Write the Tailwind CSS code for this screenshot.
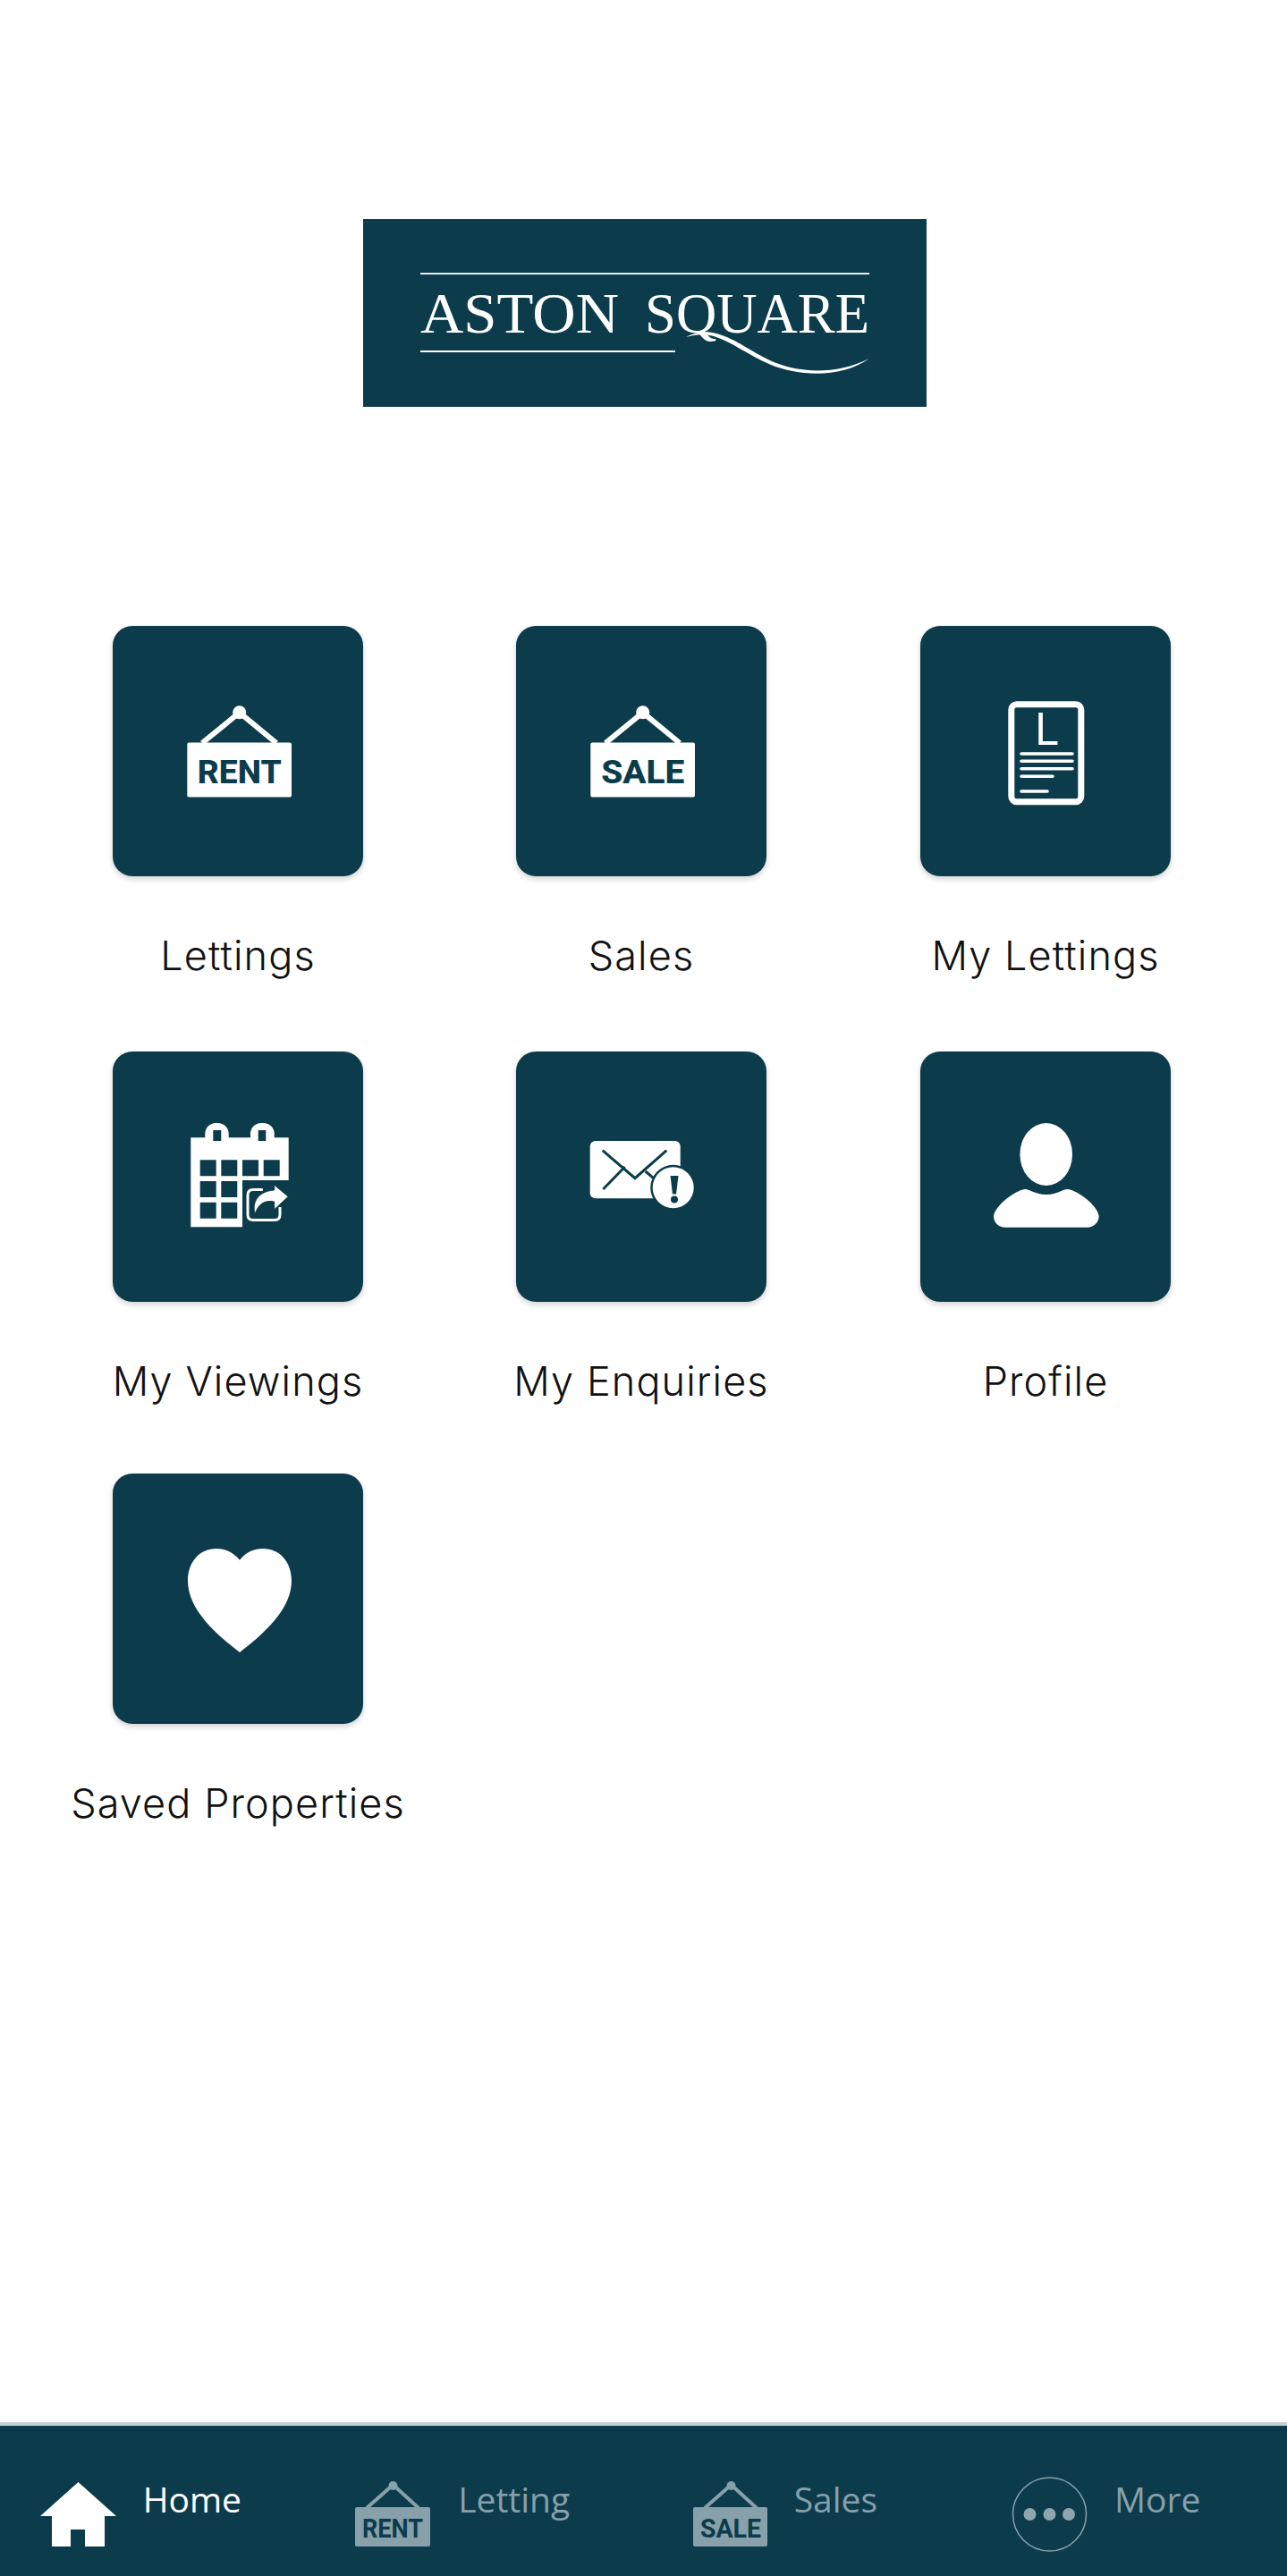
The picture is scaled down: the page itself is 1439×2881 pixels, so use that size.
<!doctype html>
<html>
  <head>
    <title>Aston Square</title>
    <script src="https://cdn.jsdelivr.net/npm/@tailwindcss/browser@4"></script>
  </head>
  <body class="bg-white">
    <div class="h-[2881px] flex flex-col font-['Inter',sans-serif]">
      <main class="flex-1">
        <!-- Logo -->
        <div class="pt-[245px] pl-[2px] flex justify-center">
          <svg class="w-[630px] h-[210px] bg-[#0c3c4c]" viewBox="0 0 630 210">
            <rect x="64" y="60" width="502" height="2" fill="#e8eef0" />
            <g fill="#fff" font-size="63" class="font-['Liberation_Serif',serif]">
              <text x="64" y="127" textLength="222" lengthAdjust="spacingAndGlyphs">ASTON</text>
              <text x="315" y="127" textLength="251" lengthAdjust="spacingAndGlyphs">SQUARE</text>
            </g>
            <rect x="64" y="147" width="285" height="2" fill="#fff" />
            <path d="M361 132C372 126 384 125 395 128C418 134 435 150 462 161C490 172 530 174 566 156C535 178 488 176 456 163C430 152 412 137 392 131C381 128 371 129 361 132Z" fill="#fff" />
          </svg>
        </div>

        <!-- Menu tiles -->
        <div class="mt-[245px] pl-[41px] grid grid-cols-[450px_452px_452px] grid-rows-[476px_472px_auto]">
          <a class="flex flex-col items-center">
            <div class="w-[280px] h-[280px] rounded-[22px] bg-[#0c3c4c] shadow-[0_3px_6px_rgba(0,0,0,0.18)]">
              <svg class="w-full h-full" viewBox="0 0 280 280">
                <path d="M100 131L141.7 97L183 131" fill="none" stroke="#fff" stroke-width="6" />
                <circle cx="141.7" cy="96.7" r="7.5" fill="#fff" />
                <rect x="83.3" y="130.5" width="116.7" height="61" rx="2" fill="#fff" />
                <text x="141.7" y="176" text-anchor="middle" textLength="94" lengthAdjust="spacingAndGlyphs" font-size="37" font-weight="800" fill="#0c3c4c" class="font-['Roboto',sans-serif]">RENT</text>
              </svg>
            </div>
            <span class="mt-[59px] text-[45px] leading-[60px] font-[350] tracking-[1.1px] text-[#111]">Lettings</span>
          </a>
          <a class="flex flex-col items-center">
            <div class="w-[280px] h-[280px] rounded-[22px] bg-[#0c3c4c] shadow-[0_3px_6px_rgba(0,0,0,0.18)]">
              <svg class="w-full h-full" viewBox="0 0 280 280">
                <path d="M100 131L141.7 97L183 131" fill="none" stroke="#fff" stroke-width="6" />
                <circle cx="141.7" cy="96.7" r="7.5" fill="#fff" />
                <rect x="83.3" y="130.5" width="116.7" height="61" rx="2" fill="#fff" />
                <text x="141.7" y="176" text-anchor="middle" textLength="93" lengthAdjust="spacingAndGlyphs" font-size="37" font-weight="800" fill="#0c3c4c" class="font-['Roboto',sans-serif]">SALE</text>
              </svg>
            </div>
            <span class="mt-[59px] text-[45px] leading-[60px] font-[350] tracking-[1.1px] text-[#111]">Sales</span>
          </a>
          <a class="flex flex-col items-center">
            <div class="w-[280px] h-[280px] rounded-[22px] bg-[#0c3c4c] shadow-[0_3px_6px_rgba(0,0,0,0.18)]">
              <svg class="w-full h-full" viewBox="0 0 280 280">
                <rect x="101.8" y="87.8" width="78" height="109" rx="6" fill="none" stroke="#fff" stroke-width="7" />
                <text x="128" y="133" font-size="49" fill="#fff" class="font-['Inter',sans-serif]">L</text>
                <path d="M113 143H170M113 151.3H170M113 159.7H170M113 168.3H148M113 185H142" fill="none" stroke="#fff" stroke-width="3.6" stroke-linecap="round" />
              </svg>
            </div>
            <span class="mt-[59px] text-[45px] leading-[60px] font-[350] tracking-[1.1px] text-[#111]">My Lettings</span>
          </a>
          <a class="flex flex-col items-center">
            <div class="w-[280px] h-[280px] rounded-[22px] bg-[#0c3c4c] shadow-[0_3px_6px_rgba(0,0,0,0.18)]">
              <svg class="w-full h-full" viewBox="0 0 280 280">
                <path fill-rule="evenodd" fill="#fff" d="M87.3 96.3H103.3V92A12 12 0 0 1 115.3 80H117.7A12 12 0 0 1 129.7 92V96.3H154V92A12 12 0 0 1 166 80H168.7A12 12 0 0 1 180.7 92V96.3H196.7V144H145V196.3H87.3ZM112.3 88V100H121.3V88ZM162.7 88V100H171.3V88ZM97.7 121.3V139.3H115.7V121.3ZM121.3 121.3V139.3H139.3V121.3ZM145 121.3V139.3H163V121.3ZM168.7 121.3V139.3H186.7V121.3ZM97.7 145V163H115.7V145ZM121.3 145V163H139.3V145ZM97.7 168.7V186.7H115.7V168.7ZM121.3 168.7V186.7H139.3V168.7Z" />
                <path d="M168 154.5H157Q151 154.5 151 160.5V182.5Q151 188.5 157 188.5H181Q187 188.5 187 182.5V174" fill="none" stroke="#fff" stroke-width="3" />
                <path d="M180.7 149.3L196.3 162.3L180.7 176.7V168C170 166 163 170 159 182C155 166 165 156 180.7 155Z" fill="#fff" stroke="#0c3c4c" stroke-width="1" />
              </svg>
            </div>
            <span class="mt-[59px] text-[45px] leading-[60px] font-[350] tracking-[1.1px] text-[#111]">My Viewings</span>
          </a>
          <a class="flex flex-col items-center">
            <div class="w-[280px] h-[280px] rounded-[22px] bg-[#0c3c4c] shadow-[0_3px_6px_rgba(0,0,0,0.18)]">
              <svg class="w-full h-full" viewBox="0 0 280 280">
                <rect x="82.7" y="100" width="101" height="64.3" rx="6" fill="#fff" />
                <path d="M96.7 110.7L133 141.7L168.3 110.7M97.3 154L121.7 129M144.7 134L155.7 143.3" fill="none" stroke="#0c3c4c" stroke-width="3" />
                <circle cx="175.7" cy="152.3" r="25.5" fill="#0c3c4c" />
                <circle cx="175.7" cy="152.3" r="23" fill="#fff" />
                <path d="M172.5 139H181.5L179 159.5H175Z" fill="#0c3c4c" />
                <circle cx="177" cy="165.5" r="4" fill="#0c3c4c" />
              </svg>
            </div>
            <span class="mt-[59px] text-[45px] leading-[60px] font-[350] tracking-[1.1px] text-[#111]">My Enquiries</span>
          </a>
          <a class="flex flex-col items-center">
            <div class="w-[280px] h-[280px] rounded-[22px] bg-[#0c3c4c] shadow-[0_3px_6px_rgba(0,0,0,0.18)]">
              <svg class="w-full h-full" viewBox="0 0 280 280">
                <ellipse cx="140.7" cy="115" rx="29.3" ry="35" fill="#fff" />
                <path d="M82 184C84 172 105 156 117 154C123 154 128 160 141 160C154 160 158 154 165 154C177 156 198 172 199.7 184C199.7 192 193 196.7 187 196.7H95C88 196.7 82 192 82 184Z" fill="#fff" />
              </svg>
            </div>
            <span class="mt-[59px] text-[45px] leading-[60px] font-[350] tracking-[1.1px] text-[#111]">Profile</span>
          </a>
          <a class="flex flex-col items-center">
            <div class="w-[280px] h-[280px] rounded-[22px] bg-[#0c3c4c] shadow-[0_3px_6px_rgba(0,0,0,0.18)]">
              <svg class="w-full h-full" viewBox="0 0 280 280">
                <path d="M142 96.7C135 88 126 84 116 84C97 84 84 99 84 120C84 152 116 180 142 200C168 180 200 152 200 120C200 99 187 84 168 84C158 84 149 88 142 96.7Z" fill="#fff" />
              </svg>
            </div>
            <span class="mt-[59px] text-[45px] leading-[60px] font-[350] tracking-[1.1px] text-[#111] whitespace-nowrap">Saved Properties</span>
          </a>
        </div>
      </main>

      <!-- Bottom tab bar -->
      <nav class="h-[172px] border-t-4 border-[#c6ced2] bg-[#0c3c4c] grid grid-cols-4 font-['Open_Sans',sans-serif] text-[39px] leading-[54px]">
        <a class="flex justify-center items-start pt-[57px] pr-[45px] gap-[30px] text-white">
          <svg class="w-[85px] h-[85px] shrink-0" viewBox="0 0 85 85">
            <path fill-rule="evenodd" fill="#fff" d="M42.5 6L85 44H72V78H13V44H0ZM34 59V78H50V59Z" />
          </svg>
          <span class="-mt-[2px]">Home</span>
        </a>
        <a class="flex justify-center items-start pt-[57px] pr-[45px] gap-[30px] text-[#87a0aa]">
          <svg class="w-[85px] h-[85px] shrink-0" viewBox="0 0 85 85">
            <path d="M13 35L42.5 9L71 35" fill="none" stroke="#87a0aa" stroke-width="4" />
            <circle cx="42.5" cy="10" r="5" fill="#87a0aa" />
            <rect x="0" y="34" width="84" height="44" rx="2" fill="#87a0aa" />
            <text x="42" y="68" text-anchor="middle" textLength="68" lengthAdjust="spacingAndGlyphs" font-size="29" font-weight="700" fill="#0c3c4c" class="font-['Roboto',sans-serif]">RENT</text>
          </svg>
          <span class="-mt-[2px]">Letting</span>
        </a>
        <a class="flex justify-center items-start pt-[57px] pr-[45px] gap-[30px] text-[#87a0aa]">
          <svg class="w-[85px] h-[85px] shrink-0" viewBox="0 0 85 85">
            <path d="M15 35L44.5 9L73 35" fill="none" stroke="#87a0aa" stroke-width="4" />
            <circle cx="44.5" cy="10" r="5" fill="#87a0aa" />
            <rect x="2" y="34" width="83" height="44" rx="2" fill="#87a0aa" />
            <text x="44" y="68" text-anchor="middle" textLength="68" lengthAdjust="spacingAndGlyphs" font-size="29" font-weight="700" fill="#0c3c4c" class="font-['Roboto',sans-serif]">SALE</text>
          </svg>
          <span class="-mt-[2px]">Sales</span>
        </a>
        <a class="flex justify-center items-start pt-[57px] pr-[45px] gap-[30px] text-[#87a0aa]">
          <svg class="w-[85px] h-[85px] shrink-0" viewBox="0 0 85 85">
            <circle cx="42.5" cy="42" r="41" fill="none" stroke="#87a0aa" stroke-width="1.5" />
            <circle cx="20.5" cy="42" r="7" fill="#8fa5ae" />
            <circle cx="42.5" cy="42" r="7" fill="#8fa5ae" />
            <circle cx="64" cy="42" r="7" fill="#8fa5ae" />
          </svg>
          <span class="-mt-[2px]">More</span>
        </a>
      </nav>
    </div>
  </body>
</html>
